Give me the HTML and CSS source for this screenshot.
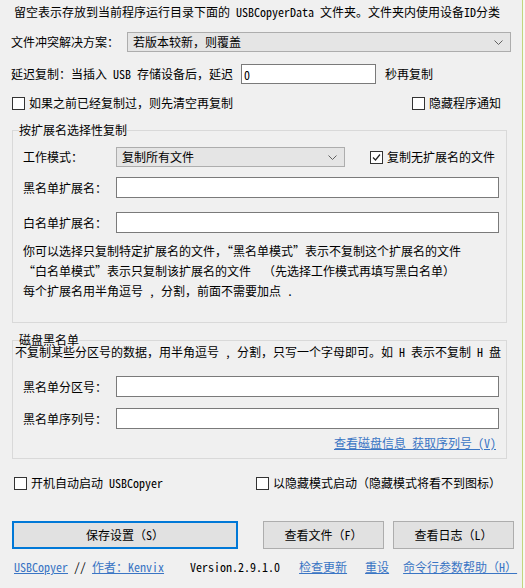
FILE: index.html
```html
<!DOCTYPE html>
<html lang="zh-CN">
<head>
  <meta charset="UTF-8" />
  <title>USBCopyer 设置</title>
  <link rel="stylesheet" href="styles.css">
</head>
<body>
  <div class="window">
    <div class="intro">留空表示存放到当前程序运行目录下面的 USBCopyerData 文件夹。文件夹内使用设备ID分类</div>

    <div class="row row-conflict">
      <span class="label-conflict">文件冲突解决方案：</span>
      <div class="combo combo-wide">
        <span>若版本较新，则覆盖</span>
        <svg class="chevron" width="9" height="5" viewBox="0 0 9 5"><polyline points="0.5,0.5 4.5,4.5 8.5,0.5" /></svg>
      </div>
    </div>

    <div class="row row-delay">
      <span class="txt">延迟复制：当插入 USB 存储设备后，延迟</span>
      <input type="text" class="input input-delay" value="0" />
      <span class="after-delay">秒再复制</span>
    </div>

    <div class="row row-opts">
      <label class="check-label"><span class="check"></span><span class="txt">如果之前已经复制过，则先清空再复制</span></label>
      <label class="check-label"><span class="check"></span><span class="txt">隐藏程序通知</span></label>
    </div>

    <!-- extension filter -->
    <fieldset class="group group-ext">
      <legend>按扩展名选择性复制</legend>
      <div class="g-row row-mode">
        <span class="g-label">工作模式：</span>
        <div class="combo combo-mode">
          <span>复制所有文件</span>
          <svg class="chevron" width="9" height="5" viewBox="0 0 9 5"><polyline points="0.5,0.5 4.5,4.5 8.5,0.5" /></svg>
        </div>
        <label class="check-label check-noext"><span class="check"><svg width="11" height="11" viewBox="0 0 11 11"><polyline points="2,5.5 4.5,8 9,2.5" /></svg></span><span class="txt">复制无扩展名的文件</span></label>
      </div>
      <div class="g-row row-field row-black">
        <span class="g-label">黑名单扩展名：</span>
        <input type="text" class="input input-wide" />
      </div>
      <div class="g-row row-field row-white">
        <span class="g-label">白名单扩展名：</span>
        <input type="text" class="input input-wide" />
      </div>
      <div class="notes">
        <div class="txt">你可以选择只复制特定扩展名的文件，“黑名单模式”表示不复制这个扩展名的文件</div>
        <div class="txt">“白名单模式”表示只复制该扩展名的文件  （先选择工作模式再填写黑白名单）</div>
        <div class="txt">每个扩展名用半角逗号 , 分割，前面不需要加点 .</div>
      </div>
    </fieldset>

    <!-- disk blacklist -->
    <fieldset class="group group-disk">
      <legend>磁盘黑名单</legend>
      <div class="disk-desc txt">不复制某些分区号的数据，用半角逗号 , 分割，只写一个字母即可。如 H 表示不复制 H 盘</div>
      <div class="g-row row-field row-part">
        <span class="g-label">黑名单分区号：</span>
        <input type="text" class="input input-wide" />
      </div>
      <div class="g-row row-field row-serial">
        <span class="g-label">黑名单序列号：</span>
        <input type="text" class="input input-wide" />
      </div>
      <div class="disk-link"><a href="#">查看磁盘信息 获取序列号 (V)</a></div>
    </fieldset>

    <div class="row row-boot">
      <label class="check-label boot-auto"><span class="check"></span><span class="txt">开机自动启动 USBCopyer</span></label>
      <label class="check-label"><span class="check"></span><span class="txt">以隐藏模式启动（隐藏模式将看不到图标）</span></label>
    </div>

    <div class="row row-buttons">
      <button class="btn btn-save">保存设置（S）</button>
      <button class="btn btn-files">查看文件（F）</button>
      <button class="btn btn-log">查看日志（L）</button>
    </div>

    <div class="row footer">
      <a href="#">USBCopyer</a><span class="txt"> // </span><a href="#">作者：Kenvix</a>
      <span class="version">Version.2.9.1.0</span>
      <a href="#" class="f-update">检查更新</a>
      <a href="#" class="f-reset">重设</a>
      <a href="#" class="f-help">命令行参数帮助（H）</a>
    </div>
  </div>
</body>
</html>
```

FILE: styles.css
```css
html {
  background-color: #f7f7f2;
}
body {
  margin: 0;
  font-family: "Noto Sans Mono CJK SC", "Noto Sans CJK SC", monospace;
  font-size: 12px;
  line-height: 14px;
  color: #000;
}
.window {
  width: 523px;
  min-height: 588px;
  box-sizing: border-box;
  background-color: #f0f0f0;
  border-right: 1px solid #c2d57e;
}
.txt {
  white-space: pre;
}
.intro {
  height: 24px;
  line-height: 24px;
  padding-left: 14px;
  white-space: pre;
}
.row {
  display: flex;
  align-items: center;
}
.row-conflict {
  margin-top: 8px;
  height: 20px;
  padding-left: 11px;
}
.label-conflict {
  width: 116px;
}
.combo {
  height: 20px;
  box-sizing: border-box;
  border: 1px solid #adadad;
  background-color: #e5e5e5;
  display: flex;
  align-items: center;
  justify-content: space-between;
  padding: 0 7px 0 5px;
}
.combo-wide {
  width: 384px;
}
.chevron polyline {
  fill: none;
  stroke: #606060;
  stroke-width: 1;
}
.input {
  box-sizing: border-box;
  border: 1px solid #7a7a7a;
  background-color: #fff;
  font: inherit;
  padding: 0 2px;
  margin: 0;
  outline: none;
}
.row-delay {
  margin-top: 12px;
  height: 20px;
  padding-left: 11px;
}
.input-delay {
  width: 135px;
  height: 20px;
  margin-left: 8px;
}
.after-delay {
  margin-left: 9px;
}
.row-opts {
  margin-top: 12px;
  height: 14px;
  padding-left: 12px;
  padding-right: 21px;
  justify-content: space-between;
}
.check-label {
  display: flex;
  align-items: center;
}
.check {
  width: 13px;
  height: 13px;
  box-sizing: border-box;
  border: 1px solid #333;
  background-color: #fff;
  margin-right: 4px;
  display: flex;
  align-items: center;
  justify-content: center;
}
.check svg polyline {
  fill: none;
  stroke: #222;
  stroke-width: 1.2;
}

/* group boxes */
.group {
  width: 495px;
  box-sizing: border-box;
  margin: 0 0 0 12px;
  border: 1px solid #d9d9d9;
  padding: 0 7px 0 6px;
  min-width: 0;
}
.group legend {
  padding: 0;
  line-height: 12px;
}
.group-ext {
  margin-top: 14px;
  padding-top: 11px;
  padding-bottom: 21px;
}
.group-disk {
  margin-top: 11px;
  padding-bottom: 8px;
}
.g-row {
  display: flex;
  align-items: center;
  padding-left: 4px;
}
.g-label {
  width: 93px;
}
.row-mode {
  height: 20px;
}
.combo-mode {
  width: 229px;
}
.check-noext {
  margin-left: 25px;
}
.row-field {
  height: 21px;
}
.input-wide {
  width: 383px;
  height: 21px;
}
.row-black {
  margin-top: 10px;
}
.row-white {
  margin-top: 14px;
}
.notes {
  margin-top: 8px;
  padding-left: 4px;
  line-height: 20px;
}
.disk-desc {
  margin: 0 0 0 -4px;
  line-height: 12px;
}
.row-part {
  margin-top: 18px;
}
.row-serial {
  margin-top: 11px;
}
.disk-link {
  margin-top: 7px;
  text-align: right;
  padding-right: 3px;
}
a {
  color: #3a75c4;
  text-decoration: underline;
  white-space: pre;
}

/* bottom */
.row-boot {
  margin-top: 17px;
  height: 14px;
  padding-left: 14px;
}
.boot-auto {
  width: 242px;
}
.row-buttons {
  margin-top: 31px;
  padding-left: 12px;
}
.btn {
  height: 28px;
  box-sizing: border-box;
  border: 1px solid #adadad;
  background-color: #e1e1e1;
  font: inherit;
  color: #000;
  padding: 0;
  cursor: pointer;
}
.btn-save {
  width: 226px;
  border: 2px solid #0078d7;
}
.btn-files {
  width: 121px;
  margin-left: 25px;
}
.btn-log {
  width: 121px;
  margin-left: 9px;
}
.footer {
  margin-top: 11px;
  height: 14px;
  padding-left: 14px;
}
.version {
  margin-left: 26px;
}
.f-update {
  margin-left: 19px;
}
.f-reset {
  margin-left: 18px;
}
.f-help {
  margin-left: 14px;
}
```
